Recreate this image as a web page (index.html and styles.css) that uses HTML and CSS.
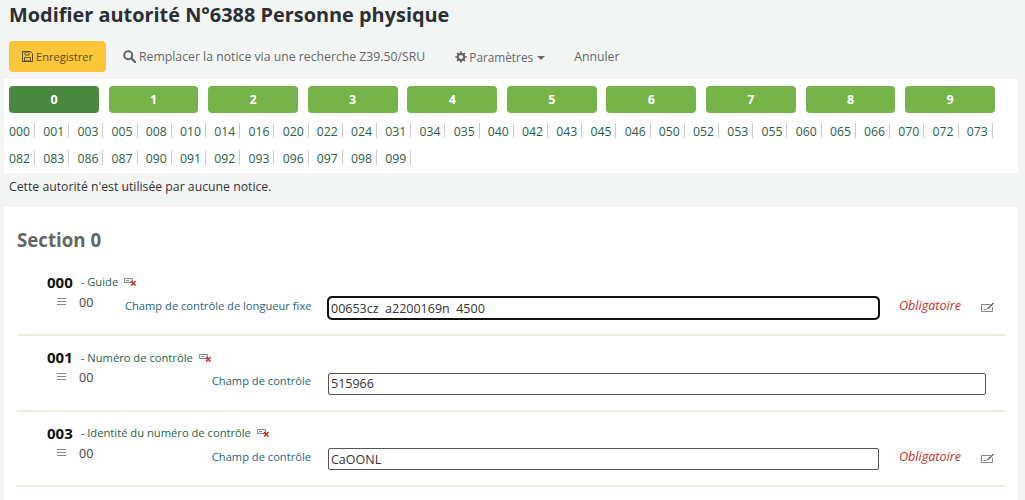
FILE: index.html
```html
<!DOCTYPE html>
<html lang="fr">
<head>
<meta charset="utf-8">
<title>Modifier autorité</title>
<link rel="stylesheet" href="styles.css">
</head>
<body>
<h1 class="title">Modifier autorité N°6388 Personne physique</h1>
<div class="toolbar">
  <button class="btn-save"><svg class="ic" width="11" height="11" viewBox="0 0 11 11"><path d="M1 .5h7.500L10.500 2.500v8H.5v-10z" fill="none" stroke="#5a4a20"/><path d="M3 1h4v3H3zM2.500 6.500h6V10h-6z" fill="none" stroke="#5a4a20" stroke-width=".9"/></svg>Enregistrer</button>
  <a class="act act-search"><svg class="ic" width="13" height="13" viewBox="0 0 13 13"><circle cx="5.200" cy="5.200" r="4" fill="none" stroke="#666" stroke-width="2"/><path d="M8.200 8.200l3.800 3.800" stroke="#666" stroke-width="2.400" stroke-linecap="round"/></svg>Remplacer la notice via une recherche Z39.50/SRU</a>
  <a class="act act-params"><svg class="ic" width="12" height="12" viewBox="0 0 12 12"><circle cx="6" cy="6" r="3.200" fill="none" stroke="#666" stroke-width="2.200"/><path d="M6 .3v2.400M6 9.300v2.400M.3 6h2.400M9.300 6h2.400M2 2l1.600 1.600M8.400 8.400L10 10M10 2L8.400 3.600M3.600 8.400L2 10" stroke="#666" stroke-width="1.700"/></svg>Paramètres<span class="caret"></span></a>
  <a class="act act-cancel">Annuler</a>
</div>
<div class="panel">
  <div class="tabs">
    <button class="tab tab-on">0</button><button class="tab">1</button><button class="tab">2</button><button class="tab">3</button><button class="tab">4</button><button class="tab">5</button><button class="tab">6</button><button class="tab">7</button><button class="tab">8</button><button class="tab">9</button>
  </div>
  <div class="links">
    <a>000</a><a>001</a><a>003</a><a>005</a><a>008</a><a>010</a><a>014</a><a>016</a><a>020</a><a>022</a><a>024</a><a>031</a><a>034</a><a>035</a><a>040</a><a>042</a><a>043</a><a>045</a><a>046</a><a>050</a><a>052</a><a>053</a><a>055</a><a>060</a><a>065</a><a>066</a><a>070</a><a>072</a><a>073</a><a>082</a><a>083</a><a>086</a><a>087</a><a>090</a><a>091</a><a>092</a><a>093</a><a>096</a><a>097</a><a>098</a><a>099</a>
  </div>
</div>
<p class="note">Cette autorité n'est utilisée par aucune notice.</p>
<section class="card">
  <h2 class="section-title">Section 0</h2>

  <div class="field">
    <div class="field-head"><b class="code">000</b><span class="name">- Guide</span><svg class="del" width="13" height="9" viewBox="0 0 13 9"><path d="M.5 1.500h8v4h-8z" fill="none" stroke="#888"/><path d="M2 3.500h3" stroke="#888"/><path d="M7 4l4.500 4.500M11.500 4L7 8.500" stroke="#c9302c" stroke-width="1.600"/></svg></div>
    <div class="field-row">
      <div class="ind"><span class="bars"></span><span class="ind-v">00</span></div>
      <label class="lab">Champ de contrôle de longueur fixe</label>
      <input class="inp inp-short inp-focus" value="00653cz  a2200169n  4500">
      <em class="req">Obligatoire</em>
      <svg class="edit" width="14" height="11" viewBox="0 0 14 11"><path d="M.5 3.500h9M.5 3.500v7h11V6" fill="none" stroke="#888"/><path d="M2.500 8.500h3" stroke="#888"/><path d="M6 7.500l6-6 1 1-6 6z" fill="#666"/></svg>
    </div>
  </div>

  <div class="field">
    <div class="field-head"><b class="code">001</b><span class="name">- Numéro de contrôle</span><svg class="del" width="13" height="9" viewBox="0 0 13 9"><path d="M.5 1.500h8v4h-8z" fill="none" stroke="#888"/><path d="M2 3.500h3" stroke="#888"/><path d="M7 4l4.500 4.500M11.500 4L7 8.500" stroke="#c9302c" stroke-width="1.600"/></svg></div>
    <div class="field-row">
      <div class="ind"><span class="bars"></span><span class="ind-v">00</span></div>
      <label class="lab">Champ de contrôle</label>
      <input class="inp inp-long" value="515966">
    </div>
  </div>

  <div class="field">
    <div class="field-head"><b class="code">003</b><span class="name">- Identité du numéro de contrôle</span><svg class="del" width="13" height="9" viewBox="0 0 13 9"><path d="M.5 1.500h8v4h-8z" fill="none" stroke="#888"/><path d="M2 3.500h3" stroke="#888"/><path d="M7 4l4.500 4.500M11.500 4L7 8.500" stroke="#c9302c" stroke-width="1.600"/></svg></div>
    <div class="field-row">
      <div class="ind"><span class="bars"></span><span class="ind-v">00</span></div>
      <label class="lab">Champ de contrôle</label>
      <input class="inp inp-short" value="CaOONL">
      <em class="req">Obligatoire</em>
      <svg class="edit" width="14" height="11" viewBox="0 0 14 11"><path d="M.5 3.500h9M.5 3.500v7h11V6" fill="none" stroke="#888"/><path d="M2.500 8.500h3" stroke="#888"/><path d="M6 7.500l6-6 1 1-6 6z" fill="#666"/></svg>
    </div>
  </div>
</section>
</body>
</html>
```

FILE: styles.css
```css
* { box-sizing: border-box; }
html, body { height: 500px; overflow: hidden; }
body {
  margin: 0;
  background: #f3f5f5;
  font-family: "Open Sans", "Noto Sans", sans-serif;
  font-size: 12.25px;
  color: #333;
}
.title {
  margin: 0;
  padding: 0 9px;
  height: 41px;
  font-size: 19.9px;
  line-height: 30px;
  font-weight: 700;
  color: #2b2f33;
}
.toolbar {
  display: flex;
  align-items: center;
  height: 31px;
  padding-left: 9px;
}
.ic { margin-right: 3px; flex: none; }
.btn-save {
  display: flex;
  align-items: center;
  width: 97px;
  height: 31px;
  padding: 0 0 0 13px;
  border: 0;
  border-radius: 4px;
  background: #fcc63a;
  color: #5a4a20;
  font: 11.1px "Open Sans", sans-serif;
  white-space: nowrap;
}
.act {
  display: flex;
  align-items: center;
  color: #666;
  white-space: nowrap;
}
.act-search { margin-left: 17px; }
.act-params { margin-left: 30px; font-size: 11.8px; }
.act-params .ic { margin-right: 2px; }
.act-cancel { margin-left: 29px; }
.caret {
  margin-left: 4px;
  margin-top: 2px;
  border-top: 4px solid #666;
  border-left: 4px solid transparent;
  border-right: 4px solid transparent;
}
.panel {
  margin: 7px 7px 0 4px;
  height: 94px;
  padding: 7px 5px 0;
  background: #fff;
}
.tabs { display: flex; gap: 9.65px; width: 986px; }
.tab {
  flex: 1 1 0;
  height: 27px;
  border: 0;
  border-radius: 4px;
  background: #76b349;
  color: #fff;
  font: 700 12.5px "Open Sans", sans-serif;
  padding: 0;
}
.tab-on { background: #4a8842; }
.links {
  display: flex;
  flex-wrap: wrap;
  width: 1000px;
  margin-top: 5px;
}
.links a {
  height: 27px;
  line-height: 27px;
  padding-right: 5px;
  margin-right: 8.2px;
  color: #2a5f4a;
  position: relative;
}
.links a::after {
  content: "";
  position: absolute;
  right: 0;
  top: 5px;
  height: 15px;
  border-right: 1px solid #ccc;
}
.note {
  margin: 0;
  padding: 0 9px;
  height: 34px;
  line-height: 27px;
  color: #333;
}
.card {
  margin: 0 7px 0 4px;
  height: 293px;
  padding: 0 13px;
  background: #fff;
}
.section-title {
  margin: 0;
  padding-top: 20px;
  height: 53.5px;
  font-size: 18.7px;
  line-height: 25px;
  font-weight: 700;
  color: #666;
}
.field {
  height: 75.5px;
  padding: 11px 0 0 30px;
  border-bottom: 2px solid #e6f0dc;
}
.field-head { display: flex; align-items: center; height: 20px; }
.code { font-size: 15px; color: #111; font-weight: 700; }
.name { margin-left: 8px; color: #2a5f4a; font-size: 11.2px; }
.del { margin-left: 6px; }
.field-row { display: flex; align-items: flex-start; }
.ind { display: flex; flex: none; width: 78px; }
.bars {
  width: 9px;
  height: 7px;
  margin: 6px 0 0 10px;
  border-top: 1px solid #888;
  border-bottom: 1px solid #888;
  background: linear-gradient(#888, #888) center / 100% 1px no-repeat;
}
.ind-v { margin: 2px 0 0 13px; line-height: 17px; font-size: 12.5px; color: #444; }
.lab {
  flex: none;
  width: 186px;
  padding-top: 5px;
  text-align: right;
  white-space: nowrap;
  font-size: 11.15px;
  color: #2a6478;
  line-height: 17px;
}
.inp {
  margin: 5.5px 0 0 17px;
  height: 22px;
  border: 1px solid #555;
  border-radius: 2px;
  padding: 0 2px;
  background: #fff;
  color: #333;
  font: 12.5px "Open Sans", sans-serif;
}
.inp-short { width: 551px; }
.inp-long { width: 658px; }
.inp-focus { outline: 2px solid #111; outline-offset: -1px; border-radius: 4px; }
.req { margin: 5px 0 0 20px; line-height: 17px; font-size: 12.6px; color: #c9302c; font-style: italic; }
.edit { margin: 9px 0 0 20px; }
```
